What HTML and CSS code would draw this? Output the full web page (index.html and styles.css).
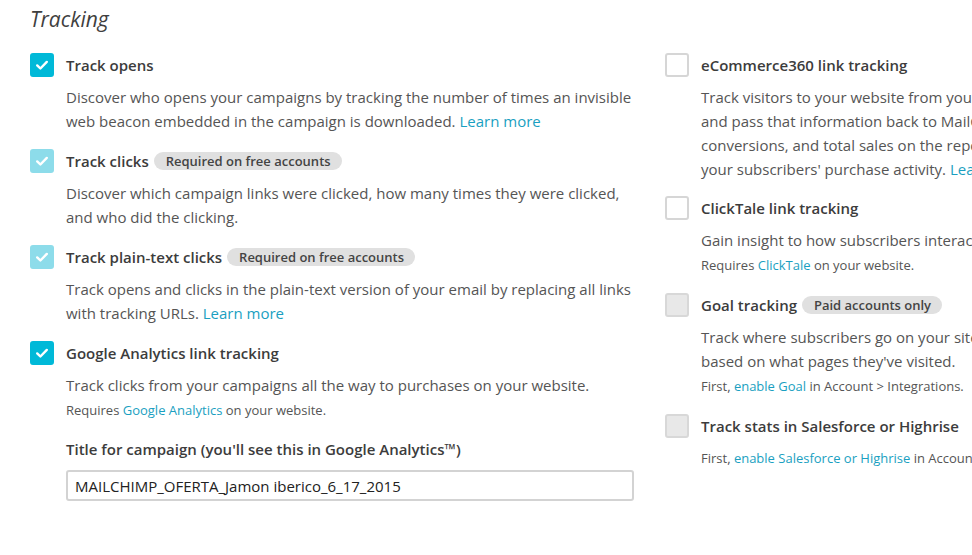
FILE: index.html
```html
<!DOCTYPE html>
<html lang="en">
<head>
<meta charset="utf-8">
<title>Tracking</title>
<link rel="stylesheet" href="styles.css">
</head>
<body>
<div class="page">
  <h2 class="heading">Tracking</h2>
  <div class="columns">
    <div class="col col-left">
      <div class="item">
        <span class="box checked"><svg viewBox="0 0 24 24" width="24" height="24"><path d="M7.2 12.4l3.2 3.1 6.4-6.6" fill="none" stroke="#fff" stroke-width="2.4" stroke-linecap="round" stroke-linejoin="round"/></svg></span>
        <div class="body">
          <div class="title">Track opens</div>
          <p class="desc">Discover who opens your campaigns by tracking the number of times an invisible web beacon embedded in the campaign is downloaded. <a href="#">Learn more</a></p>
        </div>
      </div>
      <div class="item">
        <span class="box checked disabled"><svg viewBox="0 0 24 24" width="24" height="24"><path d="M7.2 12.4l3.2 3.1 6.4-6.6" fill="none" stroke="#fff" stroke-width="2.4" stroke-linecap="round" stroke-linejoin="round"/></svg></span>
        <div class="body">
          <div class="title">Track clicks <span class="badge">Required on free accounts</span></div>
          <p class="desc">Discover which campaign links were clicked, how many times they were clicked, and who did the clicking.</p>
        </div>
      </div>
      <div class="item">
        <span class="box checked disabled"><svg viewBox="0 0 24 24" width="24" height="24"><path d="M7.2 12.4l3.2 3.1 6.4-6.6" fill="none" stroke="#fff" stroke-width="2.4" stroke-linecap="round" stroke-linejoin="round"/></svg></span>
        <div class="body">
          <div class="title">Track plain-text clicks <span class="badge">Required on free accounts</span></div>
          <p class="desc">Track opens and clicks in the plain-text version of your email by replacing all links with tracking URLs. <a href="#">Learn more</a></p>
        </div>
      </div>
      <div class="item">
        <span class="box checked"><svg viewBox="0 0 24 24" width="24" height="24"><path d="M7.2 12.4l3.2 3.1 6.4-6.6" fill="none" stroke="#fff" stroke-width="2.4" stroke-linecap="round" stroke-linejoin="round"/></svg></span>
        <div class="body">
          <div class="title">Google Analytics link tracking</div>
          <p class="desc">Track clicks from your campaigns all the way to purchases on your website.</p>
          <p class="note">Requires <a href="#">Google Analytics</a> on your website.</p>
          <label class="field-label">Title for campaign (you'll see this in Google Analytics™)</label>
          <input class="field" type="text" value="MAILCHIMP_OFERTA_Jamon iberico_6_17_2015">
        </div>
      </div>
    </div>
    <div class="col col-right">
      <div class="item">
        <span class="box"></span>
        <div class="body">
          <div class="title">eCommerce360 link tracking</div>
          <p class="desc">Track visitors to your website from your MailChimp campaigns, capture orders,<br>and pass that information back to MailChimp. View purchase details,<br>conversions, and total sales on the reports page. Segment based on<br>your subscribers' purchase activity. <a href="#">Learn more</a></p>
        </div>
      </div>
      <div class="item">
        <span class="box"></span>
        <div class="body">
          <div class="title">ClickTale link tracking</div>
          <p class="desc">Gain insight to how subscribers interact with your website after they click.</p>
          <p class="note">Requires <a href="#">ClickTale</a> on your website.</p>
        </div>
      </div>
      <div class="item">
        <span class="box disabled"></span>
        <div class="body">
          <div class="title">Goal tracking <span class="badge">Paid accounts only</span></div>
          <p class="desc">Track where subscribers go on your site, and send them targeted campaigns<br>based on what pages they've visited.</p>
          <p class="note">First, <a href="#">enable Goal</a> in Account &gt; Integrations.</p>
        </div>
      </div>
      <div class="item">
        <span class="box disabled"></span>
        <div class="body">
          <div class="title">Track stats in Salesforce or Highrise</div>
          <p class="note stats">First, <a href="#">enable Salesforce or Highrise</a> in Account &gt; Integrations.</p>
        </div>
      </div>
    </div>
  </div>
</div>
</body>
</html>
```

FILE: styles.css
```css
html, body {
  margin: 0;
  padding: 0;
  background: #fff;
  overflow: hidden;
}
body {
  font-family: "Open Sans", "Liberation Sans", sans-serif;
  color: #555;
  width: 972px;
  height: 555px;
}
.page {
  padding: 0 0 0 30px;
}
.heading {
  margin: 0;
  padding-top: 2px;
  height: 53px;
  box-sizing: border-box;
  font-size: 21px;
  line-height: 34px;
  font-style: italic;
  font-weight: 400;
  color: #3f3f3f;
}
.columns {
  display: grid;
  grid-template-columns: 604px 604px;
  column-gap: 31px;
}
.col {
  display: flex;
  flex-direction: column;
}
.col-left {
  gap: 16px;
}
.col-right {
  gap: 15px;
}
.item {
  display: flex;
  gap: 12px;
}
.box {
  flex: none;
  width: 24px;
  height: 24px;
  box-sizing: border-box;
  border-radius: 3px;
  border: 2px solid #d6d6d6;
  background: #fff;
  display: flex;
  align-items: center;
  justify-content: center;
}
.box svg {
  display: block;
  margin: -2px;
}
.box.checked {
  background: #00b9d8;
  border-color: #00b9d8;
}
.box.checked.disabled {
  background: #8ddcea;
  border-color: #8ddcea;
}
.box.disabled {
  background: #e8e8e8;
  border-color: #d8d8d8;
}
.body {
  flex: 1;
  min-width: 0;
}
.title {
  font-size: 15px;
  font-weight: 600;
  line-height: 24px;
  color: #3c3c3c;
  white-space: nowrap;
}
.badge {
  display: inline-block;
  vertical-align: top;
  margin-top: 3px;
  margin-left: 1px;
  padding: 0 11px 0 12px;
  height: 18px;
  line-height: 18px;
  border-radius: 9px;
  background: #e0e0e0;
  color: #444;
  font-size: 13px;
  font-weight: 600;
}
.desc {
  margin: 8px 0 0;
  font-size: 15px;
  line-height: 24px;
  color: #555;
}
.col-right .desc,
.col-right .note {
  white-space: nowrap;
}
.note {
  margin: 0;
  font-size: 13px;
  line-height: 26px;
  color: #555;
}
.note.stats {
  margin-top: 7px;
}
a {
  color: #1a9fc1;
  text-decoration: none;
}
.field-label {
  display: block;
  margin-top: 14px;
  font-size: 15px;
  font-weight: 600;
  line-height: 24px;
  color: #3c3c3c;
}
.field {
  display: block;
  margin-top: 9px;
  width: 568px;
  height: 31px;
  box-sizing: border-box;
  border: 2px solid #d3d3d3;
  border-radius: 3px;
  padding: 0 7px;
  font-family: "Open Sans", "Liberation Sans", sans-serif;
  font-size: 15px;
  color: #222;
  background: #fff;
  outline: none;
}
```
